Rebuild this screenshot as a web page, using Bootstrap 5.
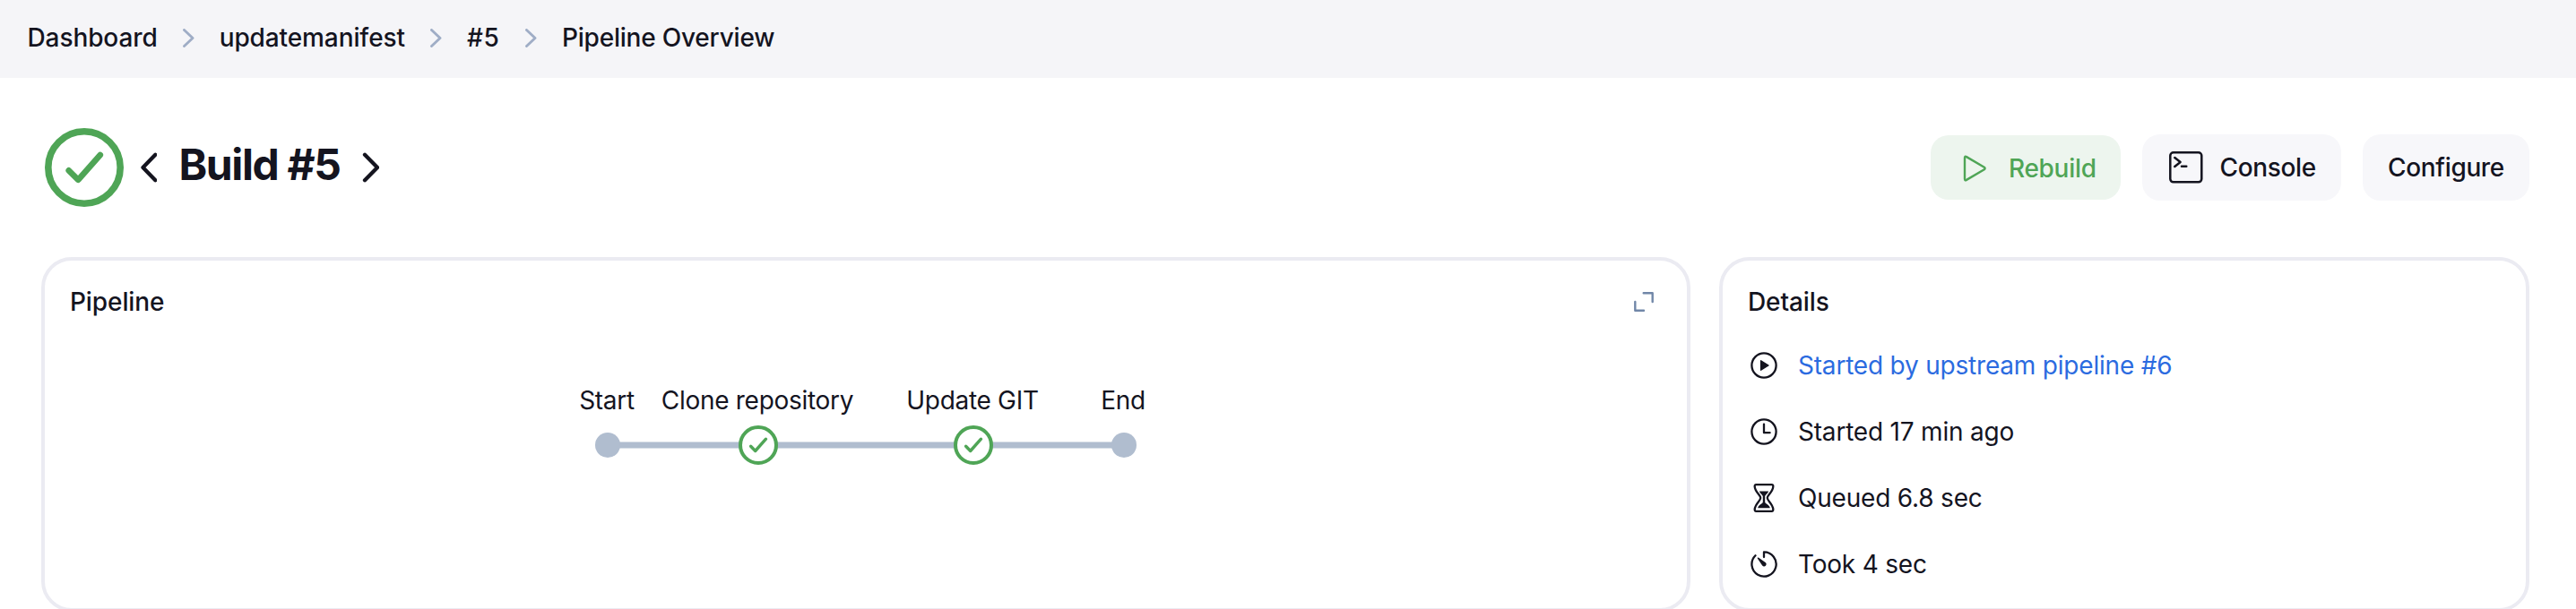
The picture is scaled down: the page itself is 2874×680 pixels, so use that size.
<!DOCTYPE html>
<html lang="en">
<head>
<meta charset="utf-8">
<meta name="viewport" content="width=device-width, initial-scale=1">
<title>Build #5 - Pipeline Overview</title>
<link href="https://cdn.jsdelivr.net/npm/bootstrap@5.3.0/dist/css/bootstrap.min.css" rel="stylesheet">
<style>
body{font-family:Inter,"Liberation Sans",sans-serif;font-size:28px;line-height:40px;color:#14141f;background:#fff;height:680px;overflow:hidden}
svg{display:block;flex:none}
.crumbs{height:87px;background:#f5f5f8;padding:0 0 3px 30.5px;font-weight:500}
.crumbs a{color:inherit;text-decoration:none;white-space:nowrap;letter-spacing:-.1px}
.crumbs .num{width:37px;letter-spacing:.8px}
.crumbs .last{letter-spacing:-.2px}
.crumbs svg{color:#9fadc6;margin:0 27.5px 0 28.5px}
.app-head{height:200px;padding:0 52px 0 50px}
.title-text{font-size:48px;font-weight:700;line-height:60px;letter-spacing:-1.4px;margin:-6px 23.5px 0 25px;width:181px;white-space:nowrap}
.prev-build{margin-left:17.5px}
.actions{gap:24px}
.app-btn,.app-btn:hover{--bs-btn-border-width:0;font-size:28px;font-weight:500;line-height:40px;border-radius:20px;height:74px;background:#f7f7fa;padding:0;color:#14141f;letter-spacing:-.35px;white-space:nowrap}
.app-btn.rebuild,.app-btn.rebuild:hover{width:212px;height:72px;background:#edf5ee;color:#4fa556;font-weight:450;padding:1px 0 0 36px;gap:25px;letter-spacing:-.3px}
.app-btn.console{width:222px;padding-left:29px;gap:17.5px}
.app-btn.configure{width:186px}
.cards{padding:0 52px 0 46px;gap:32px}
.panel{--bs-card-border-width:4px;--bs-card-border-color:#ebebf2;--bs-card-border-radius:34px;--bs-card-bg:#fff;height:396px;color:#14141f}
.details{width:904px}
.panel-head{padding:26px 37px 0 28px}
.panel-head h2{font-size:28px;font-weight:500;line-height:40px;margin:0;letter-spacing:-.1px}
.graph text{font-size:28px;fill:#14141f;letter-spacing:-.3px}
.facts{margin:31px 0 0 30px;gap:34px}
.facts li{gap:22px;white-space:nowrap;letter-spacing:-.2px}
.facts a{color:#2b6be0;text-decoration:none}
</style>
</head>
<body>
<svg width="0" height="0" class="position-absolute" aria-hidden="true">
  <defs>
    <symbol id="chev" viewBox="0 0 13 21"><path d="M1.5 1.5L11 10.5L1.5 19.5" fill="none" stroke="currentColor" stroke-width="2.9" stroke-linecap="round" stroke-linejoin="round"/></symbol>
    <symbol id="stage-ok" viewBox="0 0 44 44"><circle cx="22" cy="22" r="20" fill="#fff" stroke="#4fa556" stroke-width="4"/><path d="M13.6 23.3L18.7 28.5L30.5 15.2" fill="none" stroke="#4fa556" stroke-width="3.4" stroke-linecap="round" stroke-linejoin="round"/></symbol>
  </defs>
</svg>

<nav class="crumbs d-flex align-items-center" aria-label="breadcrumb">
  <a href="#">Dashboard</a><svg width="13" height="21"><use href="#chev"/></svg>
  <a href="#">updatemanifest</a><svg width="13" height="21"><use href="#chev"/></svg>
  <a href="#" class="num">#5</a><svg width="13" height="21"><use href="#chev"/></svg>
  <a href="#" class="last">Pipeline Overview</a>
</nav>

<header class="app-head d-flex align-items-center">
  <svg width="88" height="88" viewBox="0 0 88 88" fill="none" stroke="#4fa556"><circle cx="44" cy="44" r="40.2" stroke-width="7.6"/><path d="M26.7 47.3L37.3 57.8L61.8 30" stroke-width="6.6" stroke-linecap="round" stroke-linejoin="round"/></svg>
  <svg class="prev-build" width="19" height="34" viewBox="0 0 19 34" fill="none" stroke="#14141f" stroke-width="4.3" stroke-linecap="round" stroke-linejoin="round"><path d="M17.3 2.7L3.5 17L17.3 31.3"/></svg>
  <h1 class="title-text">Build #5</h1>
  <svg width="19" height="34" viewBox="0 0 19 34" fill="none" stroke="#14141f" stroke-width="4.3" stroke-linecap="round" stroke-linejoin="round"><path d="M3 2.7L17 17L3 31.3"/></svg>
  <div class="actions d-flex align-items-center ms-auto">
    <button class="btn app-btn rebuild d-flex align-items-center">
      <svg width="26" height="30" viewBox="0 0 26 30"><path d="M2 3.3V26.7Q2 29 4 27.9L23.8 16.2Q25.4 15 23.8 13.8L4 2.1Q2 1 2 3.3Z" fill="none" stroke="currentColor" stroke-width="2.4" stroke-linejoin="round"/></svg>
      Rebuild
    </button>
    <button class="btn app-btn console d-flex align-items-center">
      <svg width="40" height="40" viewBox="0 0 40 40" fill="none" stroke="currentColor" stroke-width="2.5" stroke-linecap="round" stroke-linejoin="round"><rect x="2.3" y="3.3" width="35" height="33" rx="3.5"/><path d="M7.3 9L13.6 14L7.3 19M15 18.7H20.3"/></svg>
      Console
    </button>
    <button class="btn app-btn configure">Configure</button>
  </div>
</header>

<main class="cards d-flex">
  <section class="card panel flex-grow-1">
    <div class="panel-head d-flex align-items-center justify-content-between">
      <h2>Pipeline</h2>
      <svg width="22" height="22" viewBox="0 0 22 22" fill="none" stroke="#7187a8" stroke-width="2.4" stroke-linecap="round" stroke-linejoin="round"><path d="M10.7 1.3H20.7V11M1.3 11V20.7H11"/></svg>
    </div>
    <svg class="graph" width="1832" height="200" viewBox="50 357 1832 200">
      <path d="M678 497H1254" stroke="#b0bdcf" stroke-width="7"/>
      <circle cx="678" cy="497" r="14" fill="#b0bdcf"/><circle cx="1254" cy="497" r="14" fill="#b0bdcf"/>
      <use href="#stage-ok" x="824" y="475" width="44" height="44"/>
      <use href="#stage-ok" x="1064" y="475" width="44" height="44"/>
      <g text-anchor="middle">
        <text x="677" y="457">Start</text>
        <text x="845" y="457">Clone repository</text>
        <text x="1085" y="457">Update GIT</text>
        <text x="1253" y="457">End</text>
      </g>
    </svg>
  </section>

  <aside class="card panel details">
    <div class="panel-head"><h2>Details</h2></div>
    <ul class="facts list-unstyled d-flex flex-column">
      <li class="d-flex align-items-center">
        <svg width="32" height="32" viewBox="0 0 32 32"><circle cx="16" cy="16" r="13.6" fill="none" stroke="#14141f" stroke-width="2.3"/><path d="M12.6 10.8V21.2L21 16Z" fill="#14141f" stroke="#14141f" stroke-width="1.4" stroke-linejoin="round"/></svg>
        <a href="#">Started by upstream pipeline #6</a>
      </li>
      <li class="d-flex align-items-center">
        <svg width="32" height="32" viewBox="0 0 32 32" fill="none" stroke="#14141f" stroke-width="2.3" stroke-linecap="round" stroke-linejoin="round"><circle cx="16" cy="16" r="13.6"/><path d="M16 7.6V17.2H22.6"/></svg>
        <span>Started 17 min ago</span>
      </li>
      <li class="d-flex align-items-center">
        <svg width="32" height="32" viewBox="0 0 32 32"><path d="M7.3 1.2H24.7Q26.5 1.2 26.3 3.4C25.8 9.5 19.8 12.8 19.8 16S25.8 22.5 26.3 28.6Q26.5 30.8 24.7 30.8H7.3Q5.5 30.8 5.7 28.6C6.2 22.5 12.2 19.2 12.2 16S6.2 9.5 5.7 3.4Q5.5 1.2 7.3 1.2Z" fill="none" stroke="#14141f" stroke-width="2.3" stroke-linejoin="round"/><path d="M10.8 8.4H21.2C20.4 10.8 17.2 12.6 17.2 14.2V20.8C17.2 22.4 22.4 23.8 22.8 27.3H9.2C9.6 23.8 14.8 22.4 14.8 20.8V14.2C14.8 12.6 11.6 10.8 10.8 8.4Z" fill="#14141f"/></svg>
        <span>Queued 6.8 sec</span>
      </li>
      <li class="d-flex align-items-center">
        <svg width="32" height="32" viewBox="0 0 32 32"><path d="M16 8V2.4A13.6 13.6 0 1 1 6.5 6.3" fill="none" stroke="#14141f" stroke-width="2.3" stroke-linecap="round" stroke-linejoin="round"/><path d="M9.2 8.6Q8.4 8.6 8.8 9.6L14 17.2A2.5 2.5 0 1 0 17.6 13.9L10.2 8.8Z" fill="#14141f"/></svg>
        <span>Took 4 sec</span>
      </li>
    </ul>
  </aside>
</main>
<script src="https://cdn.jsdelivr.net/npm/bootstrap@5.3.0/dist/js/bootstrap.bundle.min.js"></script>
</body>
</html>
